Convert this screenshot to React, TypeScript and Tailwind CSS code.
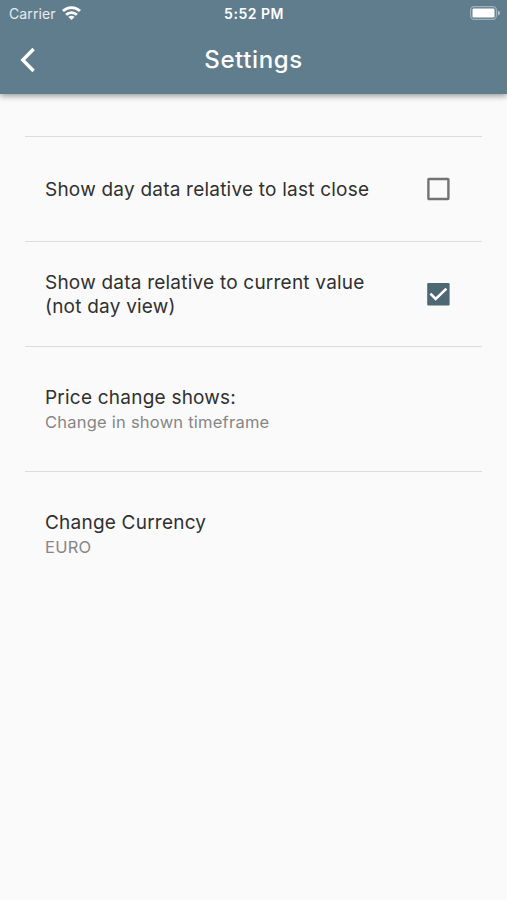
import React from "react";

const settings = [
  { title: ["Show day data relative to last close"], checked: false, height: "h-[105px]" },
  { title: ["Show data relative to current value", "(not day view)"], checked: true, height: "h-[105px]" },
  { title: ["Price change shows:"], value: "Change in shown timeframe", height: "h-[125px]" },
  { title: ["Change Currency"], value: "EURO", height: "h-[125px]" },
];

function WifiIcon() {
  return (
    <svg width="19" height="14" viewBox="0 0 19 14" fill="none" stroke="white" strokeWidth="2.8" className="-mt-px">
      <path d="M1 5.1C5.7 .5 13.3 .5 18 5.1" />
      <path d="M4.1 8.7C7.1 5.8 11.9 5.8 14.9 8.7" />
      <path d="M9.5 14L6.4 10.9C8.1 9.5 10.9 9.5 12.6 10.9Z" fill="white" stroke="none" />
    </svg>
  );
}

function BatteryIcon() {
  return (
    <svg width="31" height="14" viewBox="0 0 31 14" className="-mt-px">
      <rect x=".6" y=".6" width="25.8" height="12.8" rx="3.6" fill="none" stroke="white" strokeOpacity=".4" strokeWidth="1.2" />
      <rect x="2.5" y="2.5" width="22" height="9" rx="1.2" fill="white" />
      <path d="M27.8 4.5C30.8 5.4 30.8 8.6 27.8 9.5Z" fill="white" fillOpacity=".5" />
    </svg>
  );
}

function Checkbox({ checked }: { checked: boolean }) {
  return (
    <svg width="24" height="24" viewBox="0 0 24 24" fill="none">
      {checked ? (
        <>
          <rect x="1.2" y="1" width="22.4" height="22.4" rx="1.2" fill="#4d6874" />
          <path d="M4.4 11.6L9.7 16.9L20.4 6.6" stroke="white" strokeWidth="2.6" />
        </>
      ) : (
        <rect x="2.4" y="2" width="20" height="20" rx=".6" stroke="#737373" strokeWidth="2.4" />
      )}
    </svg>
  );
}

export default function App() {
  return (
    <div className="min-h-[900px] bg-[#fafafa] font-['Inter',sans-serif]">
      <header className="h-[94px] bg-[#607d8d] text-white shadow-[0_2px_6px_rgba(0,0,0,0.4)]">
        <div className="grid grid-cols-[1fr_auto_1fr] h-[27px] items-center pl-[8px] pr-[7px]">
          <div className="flex items-center gap-[6px] pl-px">
            <span className="text-[14px] tracking-[0.1px] text-white/85">Carrier</span>
            <WifiIcon />
          </div>
          <span className="text-center text-[14px] font-semibold tracking-[0.5px]">5:52 PM</span>
          <div className="flex justify-end -mr-px">
            <BatteryIcon />
          </div>
        </div>
        <div className="grid grid-cols-3 h-[66px] items-center px-5">
          <button aria-label="Back" className="w-fit">
            <svg width="16" height="26" viewBox="0 0 16 26" fill="none" stroke="white" strokeWidth="3.4">
              <path d="M13.6 2L2.8 13L13.6 24" />
            </svg>
          </button>
          <h1 className="text-center text-[24px] font-medium tracking-[0.6px]">Settings</h1>
        </div>
      </header>

      <main className="px-[25px] pt-[42px]">
        {settings.map((item, index) => (
          <div
            key={index}
            className={`flex items-center justify-between border-t border-[#dcdcdc] pl-5 pr-8 ${item.height}`}
          >
            <div className="pt-[2px]">
              <div className="text-[19px] leading-6 tracking-[0.22px] text-[#303030]">
                {item.title.map((line) => (
                  <p key={line}>{line}</p>
                ))}
              </div>
              {item.value && (
                <p className="text-[16.5px] leading-[25px] tracking-[0.23px] text-[#868686]">{item.value}</p>
              )}
            </div>
            {item.checked !== undefined && <Checkbox checked={item.checked} />}
          </div>
        ))}
      </main>
    </div>
  );
}
